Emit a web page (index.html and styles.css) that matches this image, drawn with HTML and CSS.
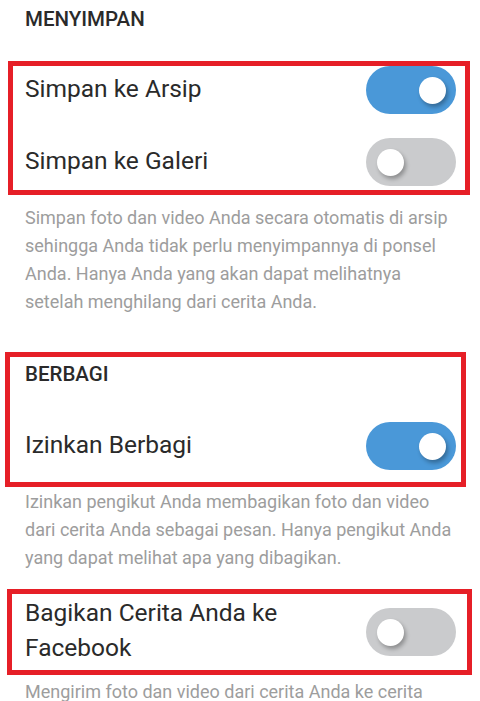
FILE: index.html
```html
<!DOCTYPE html>
<html lang="id">
<head>
  <meta charset="UTF-8" />
  <meta name="viewport" content="width=device-width, initial-scale=1.0"/>
  <title>Pengaturan Cerita</title>
  <link rel="stylesheet" href="styles.css">
</head>
<body>

  <div class="page">
    <h2 class="section-title first">MENYIMPAN</h2>

    <div class="mark mark-save">
      <div class="setting-row">
        <span class="setting-label">Simpan ke Arsip</span>
        <div class="toggle on"><span class="knob"></span></div>
      </div>
      <div class="setting-row">
        <span class="setting-label">Simpan ke Galeri</span>
        <div class="toggle"><span class="knob"></span></div>
      </div>
    </div>

    <p class="setting-desc desc-save">
      Simpan foto dan video Anda secara otomatis di arsip<br>
      sehingga Anda tidak perlu menyimpannya di ponsel<br>
      Anda. Hanya Anda yang akan dapat melihatnya<br>
      setelah menghilang dari cerita Anda.
    </p>

    <div class="mark mark-share">
      <h2 class="section-title">BERBAGI</h2>
      <div class="setting-row">
        <span class="setting-label">Izinkan Berbagi</span>
        <div class="toggle on"><span class="knob"></span></div>
      </div>
    </div>

    <p class="setting-desc desc-share">
      Izinkan pengikut Anda membagikan foto dan video<br>
      dari cerita Anda sebagai pesan. Hanya pengikut Anda<br>
      yang dapat melihat apa yang dibagikan.
    </p>

    <div class="mark mark-facebook">
      <div class="setting-row tall">
        <span class="setting-label two-line">Bagikan Cerita Anda ke<br>Facebook</span>
        <div class="toggle"><span class="knob"></span></div>
      </div>
    </div>

    <p class="setting-desc desc-facebook">
      Mengirim foto dan video dari cerita Anda ke cerita
    </p>
  </div>

</body>
</html>
```

FILE: styles.css
```css
body {
  margin: 0;
  background-color: #ffffff;
  font-family: Roboto, "Noto Sans", Arial, sans-serif;
  color: #262626;
  overflow: hidden;
}

.page {
  padding: 0 24px 0 25px;
}

.section-title {
  margin: 0;
  font-size: 20.5px;
  font-weight: 500;
  line-height: 24px;
  color: #2a2a2a;
}

.section-title.first {
  padding-top: 7px;
  margin-bottom: 30px;
}

/* red annotation frames */
.mark {
  border: 5px solid #e61f27;
}

.mark-save {
  margin: 0 -14px 0 -17px;
  padding: 0 9px 4px 12px;
  display: flex;
  flex-direction: column;
  gap: 24px;
}

.mark-share {
  margin: 36px -10px 0 -20px;
  padding: 5px 5px 12px 15px;
}

.mark-share .setting-row {
  margin-top: 36px;
}

.mark-facebook {
  margin: 17px -16px 0 -18px;
  padding: 0 11px 0 13px;
}

.setting-row {
  display: flex;
  justify-content: space-between;
  align-items: center;
  height: 48px;
}

.setting-row.tall {
  height: 76px;
}

.setting-label {
  font-size: 24.5px;
  color: #2a2a2a;
  padding-bottom: 3px;
}

.two-line {
  line-height: 35px;
  padding-bottom: 4px;
}

.toggle {
  width: 90px;
  height: 48px;
  border-radius: 24px;
  background-color: #cacbcd;
  display: flex;
  align-items: center;
  justify-content: flex-start;
  padding: 0 10px 0 11px;
  box-sizing: border-box;
  flex-shrink: 0;
}

.toggle.on {
  background-color: #4a98d8;
  justify-content: flex-end;
}

.knob {
  width: 27px;
  height: 27px;
  border-radius: 50%;
  background-color: #ffffff;
  box-shadow: 2px 3px 4px rgba(0, 0, 0, 0.3);
}

.setting-desc {
  margin: 0;
  font-size: 18px;
  line-height: 28px;
  color: #9d9d9d;
  white-space: nowrap;
}

.desc-save {
  margin-top: 9px;
}

.desc-share {
  margin-top: 1px;
}

.desc-facebook {
  margin-top: 3px;
}
```
